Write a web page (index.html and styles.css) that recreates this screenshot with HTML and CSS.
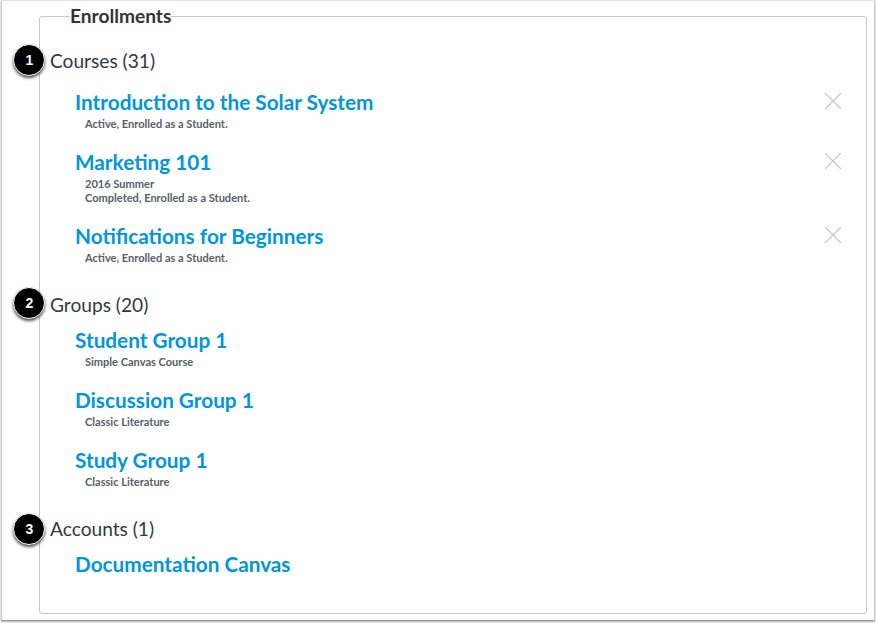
FILE: index.html
```html
<!DOCTYPE html>
<html lang="en">
<head>
<meta charset="utf-8">
<title>Enrollments</title>
<link rel="stylesheet" href="styles.css">
</head>
<body>
<main class="page">
<fieldset class="enrollments">
<legend>Enrollments</legend>
<section class="courses">
<h3><span class="badge">1</span>Courses (31)</h3>
<ul>
<li><div><a>Introduction to the Solar System</a><p>Active, Enrolled as a Student.</p></div><svg class="close" viewBox="0 0 18 18"><path d="M1 1L17 17M17 1L1 17"/></svg></li>
<li><div><a>Marketing 101</a><p>2016 Summer</p><p>Completed, Enrolled as a Student.</p></div><svg class="close" viewBox="0 0 18 18"><path d="M1 1L17 17M17 1L1 17"/></svg></li>
<li><div><a>Notifications for Beginners</a><p>Active, Enrolled as a Student.</p></div><svg class="close" viewBox="0 0 18 18"><path d="M1 1L17 17M17 1L1 17"/></svg></li>
</ul>
</section>
<section class="groups">
<h3><span class="badge">2</span>Groups (20)</h3>
<ul>
<li><div><a>Student Group 1</a><p>Simple Canvas Course</p></div></li>
<li><div><a>Discussion Group 1</a><p>Classic Literature</p></div></li>
<li><div><a>Study Group 1</a><p>Classic Literature</p></div></li>
</ul>
</section>
<section class="accounts">
<h3><span class="badge">3</span>Accounts (1)</h3>
<ul>
<li><div><a>Documentation Canvas</a></div></li>
</ul>
</section>
</fieldset>
</main>
</body>
</html>
```
FILE: styles.css
```css
* { box-sizing: border-box; margin: 0; padding: 0; }
body { width: 876px; height: 623px; overflow: hidden; background: #fff; font-family: Lato, sans-serif; color: #2d3b45; }
.page { width: 874px; height: 621px; margin-left: 1px; padding: 3px 7px 0 37px; border: 1px solid #c8c8c8; border-top-color: #e2e2e2; border-bottom-color: #999; box-shadow: 0 1px 2px #aaa; }
.enrollments { height: 610px; border: 1px solid #c7c7c7; border-radius: 3px; padding: 0 24px 0 10px; }
legend { margin-left: 20px; font-size: 19.15px; line-height: 24px; font-weight: 700; color: #333; }
h3 { position: relative; height: 30px; font-size: 19.15px; line-height: 30px; font-weight: 400; }
.badge { position: absolute; left: -37px; top: -2px; width: 32px; height: 32px; padding-left: 1px; border: 1px solid #fff; border-radius: 50%; background: #000; box-shadow: 0 2px 3px #555; color: #fff; font: bold 14px/30px "Liberation Sans", sans-serif; text-align: center; }
.groups .badge { top: -3px; }
.accounts .badge { top: -1px; }
.courses { padding-top: 18px; }
.groups, .accounts { padding-top: 8px; }
ul { list-style: none; padding-left: 25px; }
.courses ul { padding-top: 12px; }
.groups ul, .accounts ul { padding-top: 6px; }
li { display: flex; justify-content: space-between; padding-bottom: 17px; }
a { display: block; font-size: 20.75px; line-height: 28px; font-weight: 700; color: #0096db; }
p { padding-left: 10px; font-size: 11.05px; line-height: 14px; font-weight: 700; color: #566069; }
a + p { margin-top: 1px; }
.close { width: 18px; height: 18px; margin-top: 4px; }
.close path { fill: none; stroke: #c6c6c6; stroke-width: 1.1; }
```
